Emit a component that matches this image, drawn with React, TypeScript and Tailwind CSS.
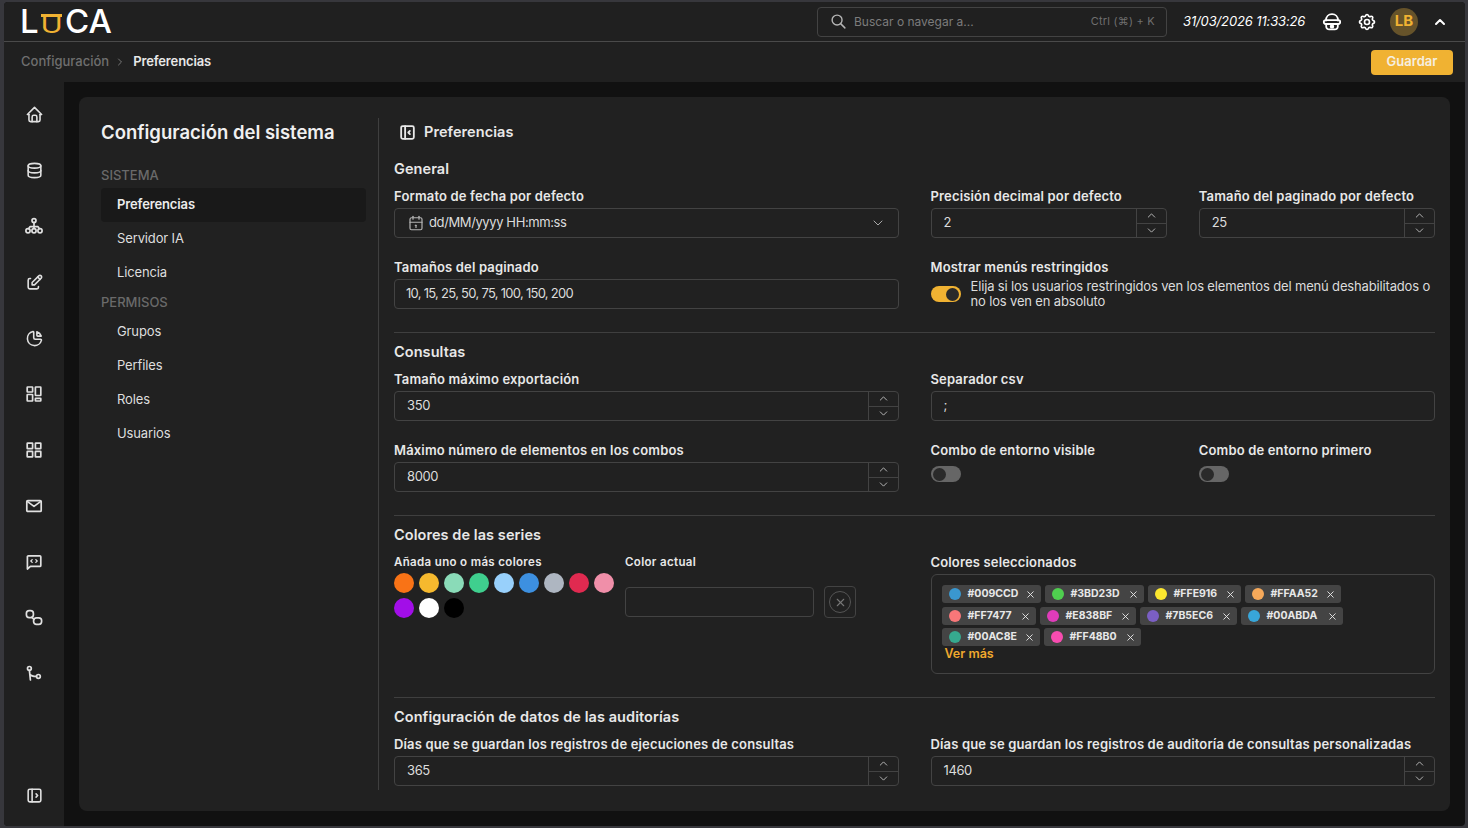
import { ReactNode } from "react";
import {
  TbCalendar,
  TbChartPie,
  TbChevronDown,
  TbChevronRight,
  TbChevronUp,
  TbDatabase,
  TbEdit,
  TbHome,
  TbLayoutSidebarLeftCollapse,
  TbLayoutSidebarLeftExpand,
  TbSearch,
  TbSettings,
  TbX,
} from "react-icons/tb";

const FONT = "font-['Inter','Liberation_Sans',sans-serif]";

// Rail icons that the icon packs don't match closely enough are drawn by hand
function Glyph({ children }: { children: ReactNode }) {
  return (
    <svg width="18" height="18" viewBox="0 0 18 18" fill="none" stroke="currentColor" strokeWidth="1.7" strokeLinecap="round" strokeLinejoin="round">
      {children}
    </svg>
  );
}

function HierarchyIcon() {
  return (
    <Glyph>
      <circle cx="9" cy="3.6" r="2" />
      <circle cx="3" cy="13.8" r="2.1" />
      <circle cx="9" cy="13.8" r="2.1" />
      <circle cx="15" cy="13.8" r="2.1" />
      <path d="M9 5.6v6M3.6 11.7 5 9.6h8l1.4 2.1" />
    </Glyph>
  );
}

function BoardIcon() {
  return (
    <Glyph>
      <rect x="2.2" y="2" width="5.4" height="5" rx=".4" />
      <rect x="2.2" y="9.5" width="5.4" height="6.5" rx=".4" />
      <rect x="10.4" y="2" width="5.4" height="8.5" rx=".4" />
      <rect x="10.4" y="13.4" width="5.4" height="2.6" rx=".4" />
    </Glyph>
  );
}

function GridIcon() {
  return (
    <Glyph>
      <rect x="2.2" y="2.2" width="5.4" height="5.4" rx=".4" />
      <rect x="10.4" y="2.2" width="5.4" height="5.4" rx=".4" />
      <rect x="2.2" y="10.4" width="5.4" height="5.4" rx=".4" />
      <rect x="10.4" y="10.4" width="5.4" height="5.4" rx=".4" />
    </Glyph>
  );
}

function MailIcon() {
  return (
    <Glyph>
      <rect x="1.8" y="3.6" width="14.4" height="10.8" rx="1" />
      <path d="m2.2 4.4 6.8 5 6.8-5" />
    </Glyph>
  );
}

function MessageIcon() {
  return (
    <Glyph>
      <path d="M2.4 16V3.8a1 1 0 0 1 1-1h11.4a1 1 0 0 1 1 1v8.6a1 1 0 0 1-1 1H5.4Z" />
      <path d="M7.2 6.6 5.8 8l1.4 1.4M10.8 6.6 12.2 8l-1.4 1.4" strokeWidth="1.3" />
    </Glyph>
  );
}

function RelationIcon() {
  return (
    <Glyph>
      <rect x="1.4" y="1.6" width="7" height="7" rx="2.8" />
      <rect x="8.6" y="8.8" width="8" height="6.6" rx="2.8" />
      <path d="M6.8 8.4 9 10.4" />
    </Glyph>
  );
}

function BranchIcon() {
  return (
    <Glyph>
      <circle cx="4.4" cy="3.4" r="1.9" />
      <circle cx="13.4" cy="11.4" r="1.9" />
      <path d="M4.4 5.3 5.4 15M4.9 9.2c1 1.6 3.2 2.2 6.6 2.2" />
    </Glyph>
  );
}

function SupportIcon() {
  return (
    <svg width="20" height="20" viewBox="0 0 20 20" fill="none" stroke="currentColor" strokeWidth="1.8" strokeLinecap="round" strokeLinejoin="round">
      <path d="M4 8.5C4 4.6 6.6 2.2 10 2.2s6 2.4 6 6.3" />
      <rect x="1.8" y="8.2" width="16.4" height="3.8" rx="1.9" />
      <path d="M4.2 12v2.4a3 3 0 0 0 3 3h5.6a3 3 0 0 0 3-3V12" />
      <circle cx="10" cy="14.4" r="1.3" fill="currentColor" />
    </svg>
  );
}

const NAV_ICONS = [
  TbHome,
  TbDatabase,
  HierarchyIcon,
  TbEdit,
  TbChartPie,
  BoardIcon,
  GridIcon,
  MailIcon,
  MessageIcon,
  RelationIcon,
  BranchIcon,
];

const SWATCHES = [
  "bg-[#f97316]",
  "bg-[#f6b92e]",
  "bg-[#8adbb8]",
  "bg-[#3fcf8e]",
  "bg-[#98d0fb]",
  "bg-[#3d90e0]",
  "bg-[#aeb6c1]",
  "bg-[#e02a50]",
  "bg-[#f08fa9]",
  "bg-[#a20ee8]",
  "bg-white",
  "bg-black",
];

const CHIP_ROWS = [
  [
    { hex: "#009CCD", dot: "bg-[#3a97cf]", w: "w-[99px]" },
    { hex: "#3BD23D", dot: "bg-[#4fcf4f]", w: "w-[99px]" },
    { hex: "#FFE916", dot: "bg-[#fbe72f]", w: "w-[93px]" },
    { hex: "#FFAA52", dot: "bg-[#f6a95a]", w: "w-[96px]" },
  ],
  [
    { hex: "#FF7477", dot: "bg-[#f87779]", w: "w-[94px]" },
    { hex: "#E838BF", dot: "bg-[#e03cba]", w: "w-[96px]" },
    { hex: "#7B5EC6", dot: "bg-[#7b5fc4]", w: "w-[97px]" },
    { hex: "#00ABDA", dot: "bg-[#38a6d9]", w: "w-[102px]" },
  ],
  [
    { hex: "#00AC8E", dot: "bg-[#36a98f]", w: "w-[98px]" },
    { hex: "#FF48B0", dot: "bg-[#f84cb0]", w: "w-[97px]" },
  ],
];

function Label({ children }: { children: ReactNode }) {
  return <div className="h-[21px] text-[13px] leading-[18px] font-semibold tracking-[0.012em] text-[#e8e8e8]">{children}</div>;
}

function Section({ children }: { children: ReactNode }) {
  return <h3 className="mb-2 h-5 text-[14.5px] leading-5 font-semibold tracking-[0.005em] text-[#e8e8e8]">{children}</h3>;
}

function Box({ children, tight }: { children?: ReactNode; tight?: boolean }) {
  return (
    <div className={`flex h-[30px] items-center rounded-[4px] border border-[#434343] text-[13px] text-[#dcdcdc] ${tight ? "pr-3 pl-[11px] tracking-[-0.055em]" : "px-3 tracking-[-0.03em]"}`}>
      {children}
    </div>
  );
}

function NumberBox({ label, value }: { label: string; value: string }) {
  return (
    <div>
      <Label>{label}</Label>
      <div className="flex h-[30px] rounded-[4px] border border-[#434343] text-[13px] text-[#dcdcdc]">
        <div className="flex flex-1 items-center pl-3 tracking-[-0.03em]">{value}</div>
        <div className="flex w-[30px] flex-col border-l border-[#434343] text-[#c8c8c8]">
          <div className="flex flex-1 items-center justify-center border-b border-[#434343]">
            <TbChevronUp size={13} strokeWidth={1.6} />
          </div>
          <div className="flex flex-1 items-center justify-center">
            <TbChevronDown size={13} strokeWidth={1.6} />
          </div>
        </div>
      </div>
    </div>
  );
}

function Toggle({ on }: { on?: boolean }) {
  return on ? (
    <div className="flex h-4 w-[30px] shrink-0 items-center justify-end rounded-full bg-[#f0b232] px-[2px]">
      <div className="h-[13px] w-[13px] rounded-full bg-[#2a2a2a]" />
    </div>
  ) : (
    <div className="flex h-4 w-[30px] shrink-0 items-center rounded-full bg-[#666] px-[2px]">
      <div className="h-[13px] w-[13px] rounded-full bg-[#2a2a2a]" />
    </div>
  );
}

function Divider() {
  return <div className="mt-[23px] mb-[9px] h-px bg-[#3f3f3f]" />;
}

function TopBar() {
  return (
    <header className="flex h-10 items-center border-b border-[#4a4a4a] pr-[17px] pl-4">
      <div className="flex items-end text-[33px] leading-none font-medium text-white">
        <span className="w-[21px]">L</span>
        <span className="relative mr-[3px] flex h-[24px] w-[21px] items-end justify-center">
          <span className="absolute top-0 left-0 h-[2.5px] w-full bg-[#f0b232]" />
          <span className="-translate-y-[3px] scale-x-[1.3] text-[23px] leading-[19px] font-normal text-[#f0b232]">U</span>
        </span>
        <span>CA</span>
      </div>
      <div className="ml-auto flex h-[30px] w-[350px] items-center rounded-[4px] border border-[#434343] pr-[11px] pl-3 text-[12px] text-[#6f6f6f]">
        <TbSearch size={17} className="mr-[7px] text-[#b4b4b4]" />
        <span className="text-[#7c7c7c]">Buscar o navegar a...</span>
        <span className="ml-auto text-[11px] tracking-[0.02em]">Ctrl (⌘) + K</span>
      </div>
      <span className="ml-4 w-[123px] shrink-0 text-[13px] tracking-[-0.01em] whitespace-nowrap text-white italic">31/03/2026 11:33:26</span>
      <div className="ml-[16px] text-white">
        <SupportIcon />
      </div>
      <TbSettings size={20} className="ml-[15px] text-white" />
      <div className="ml-[13px] flex h-7 w-7 items-center justify-center rounded-full bg-[#66532a] text-[15px] font-bold text-[#f0b232]">
        LB
      </div>
      <TbChevronUp size={16} strokeWidth={3} className="ml-[14px] text-white" />
    </header>
  );
}

function Breadcrumb() {
  return (
    <div className="flex h-[40px] items-center pr-3 pl-[17px]">
      <span className="text-[13px] font-medium text-[#6f6f6f]">Configuración</span>
      <TbChevronRight size={12} className="mr-[7px] ml-[5px] text-[#777]" />
      <span className="text-[13px] font-semibold tracking-[-0.01em] text-[#e8e8e8]">Preferencias</span>
      <button className="ml-auto h-[25px] w-[82px] rounded-[4px] bg-[#f0b232] text-[13px] font-semibold text-[#f6efe0]">
        Guardar
      </button>
    </div>
  );
}

function Rail() {
  return (
    <nav className="flex w-[60px] shrink-0 flex-col items-center bg-[#202020] pt-1 text-[#e0e0e0]">
      {NAV_ICONS.map((Icon, i) => (
        <div key={i} className="flex h-14 w-full items-center justify-center">
          <Icon size={19} />
        </div>
      ))}
      <div className="mt-auto flex h-[60px] w-full items-center justify-center pb-[1px]">
        <TbLayoutSidebarLeftExpand size={19} />
      </div>
    </nav>
  );
}

function SideMenu() {
  const item = "flex h-[34px] items-center pl-4 text-[13px] tracking-[-0.01em] text-[#dedede]";
  const head = "text-[13px] font-medium text-[#6a6a6a]";
  return (
    <aside className="w-[265px] shrink-0">
      <h2 className="mb-4 h-7 text-[18.5px] leading-7 font-semibold text-[#f0f0f0]">Configuración del sistema</h2>
      <div className={`${head} h-[26px] leading-[26px]`}>SISTEMA</div>
      <div className={`${item} rounded-[4px] bg-[#191919] font-semibold text-[#ececec]`}>Preferencias</div>
      <div className={item}>Servidor IA</div>
      <div className={item}>Licencia</div>
      <div className={`${head} h-[25px] leading-6`}>PERMISOS</div>
      <div className={item}>Grupos</div>
      <div className={item}>Perfiles</div>
      <div className={item}>Roles</div>
      <div className={item}>Usuarios</div>
    </aside>
  );
}

function Content() {
  return (
    <section className="ml-3 h-[672px] min-w-0 flex-1 border-l border-[#3f3f3f] pl-[15px]">
      <div className="mb-[13px] flex h-7 items-center gap-[7px] pl-1 text-[14.5px] font-semibold tracking-[0.005em] text-[#e8e8e8]">
        <TbLayoutSidebarLeftCollapse size={19} strokeWidth={2.3} />
        Preferencias
      </div>

      <Section>General</Section>
      <div className="grid grid-cols-2 gap-x-8 gap-y-5">
        <div>
          <Label>Formato de fecha por defecto</Label>
          <Box>
            <TbCalendar size={18} strokeWidth={1.6} className="mr-1 text-[#b4b4b4]" />
            dd/MM/yyyy HH:mm:ss
            <TbChevronDown size={16} strokeWidth={1.4} className="ml-auto text-[#b4b4b4]" />
          </Box>
        </div>
        <div className="grid grid-cols-2 gap-x-8">
          <NumberBox label="Precisión decimal por defecto" value="2" />
          <NumberBox label="Tamaño del paginado por defecto" value="25" />
        </div>
        <div>
          <Label>Tamaños del paginado</Label>
          <Box tight>10, 15, 25, 50, 75, 100, 150, 200</Box>
        </div>
        <div>
          <Label>Mostrar menús restringidos</Label>
          <div className="flex items-center gap-[10px] text-[13px] leading-[15px] tracking-[-0.012em] text-[#dcdcdc]">
            <Toggle on />
            <p>Elija si los usuarios restringidos ven los elementos del menú deshabilitados o no los ven en absoluto</p>
          </div>
        </div>
      </div>
      <Divider />

      <Section>Consultas</Section>
      <div className="grid grid-cols-2 gap-x-8 gap-y-5">
        <NumberBox label="Tamaño máximo exportación" value="350" />
        <div>
          <Label>Separador csv</Label>
          <Box>;</Box>
        </div>
        <NumberBox label="Máximo número de elementos en los combos" value="8000" />
        <div className="grid grid-cols-2 gap-x-8">
          <div>
            <Label>Combo de entorno visible</Label>
            <div className="pt-1">
              <Toggle />
            </div>
          </div>
          <div>
            <Label>Combo de entorno primero</Label>
            <div className="pt-1">
              <Toggle />
            </div>
          </div>
        </div>
      </div>
      <Divider />

      <Section>Colores de las series</Section>
      <div className="grid grid-cols-2 gap-x-8">
        <div className="flex">
          <div className="w-[231px] shrink-0">
            <div className="h-5 text-[11.5px] leading-[18px] font-semibold tracking-[0.03em] text-[#e8e8e8]">Añada uno o más colores</div>
            <div className="flex w-[225px] flex-wrap gap-[5px]">
              {SWATCHES.map((c) => (
                <span key={c} className={`h-5 w-5 rounded-full ${c}`} />
              ))}
            </div>
          </div>
          <div className="w-[189px] shrink-0">
            <div className="h-[34px] text-[11.5px] leading-[18px] font-semibold tracking-[0.03em] text-[#e8e8e8]">Color actual</div>
            <Box />
          </div>
          <div className="ml-[10px] flex h-8 w-8 shrink-0 translate-y-[33px] items-center justify-center rounded-[4px] border border-[#434343]">
            <span className="flex h-[22px] w-[22px] items-center justify-center rounded-full border border-[#555] text-[#777]">
              <TbX size={13} />
            </span>
          </div>
        </div>
        <div>
          <Label>Colores seleccionados</Label>
          <div className="h-[100px] rounded-[6px] border border-[#434343] px-[10px] pt-[10px]">
            <div className="flex flex-col gap-1">
              {CHIP_ROWS.map((row, i) => (
                <div key={i} className="flex gap-1 last:-mt-px">
                  {row.map((c) => (
                    <div
                      key={c.hex}
                      className={`flex h-[18px] items-center rounded-[3px] bg-[#444] pr-[5px] pl-[7px] text-[10.5px] font-bold text-[#e8e8e8] ${c.w}`}
                    >
                      <span className={`mr-[7px] h-3 w-3 shrink-0 rounded-full ${c.dot}`} />
                      {c.hex}
                      <TbX size={11} className="ml-auto" />
                    </div>
                  ))}
                </div>
              ))}
            </div>
            <div className="pl-[3px] text-[12.5px] leading-[16px] font-semibold text-[#f0a92e]">Ver más</div>
          </div>
        </div>
      </div>
      <Divider />

      <Section>Configuración de datos de las auditorías</Section>
      <div className="grid grid-cols-2 gap-x-8">
        <NumberBox label="Días que se guardan los registros de ejecuciones de consultas" value="365" />
        <NumberBox label="Días que se guardan los registros de auditoría de consultas personalizadas" value="1460" />
      </div>
    </section>
  );
}

export default function App() {
  return (
    <div className={`h-[828px] w-[1468px] overflow-hidden bg-[#37373c] pt-[2px] pr-[3px] pb-[2px] pl-1 ${FONT}`}>
      <div className="flex h-full flex-col overflow-hidden rounded-[4px] bg-[#111]">
        <div className="shrink-0 bg-[#202020]">
          <TopBar />
          <Breadcrumb />
        </div>
        <div className="flex min-h-0 flex-1">
          <Rail />
          <main className="min-w-0 flex-1 pt-[15px] pr-[15px] pb-[15px] pl-[15px]">
            <div className="flex h-[714px] rounded-[8px] bg-[#212121] pt-[21px] pr-[15px] pl-[22px]">
              <SideMenu />
              <Content />
            </div>
          </main>
        </div>
      </div>
    </div>
  );
}
